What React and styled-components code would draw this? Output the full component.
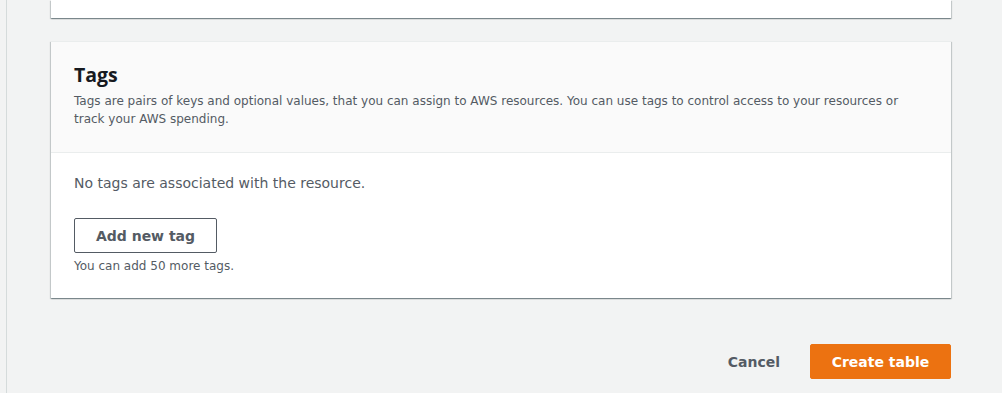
import styled, { createGlobalStyle } from "styled-components";

const GlobalStyle = createGlobalStyle`
  body {
    margin: 0;
    background-color: #f2f3f3;
    font-family: "DejaVu Sans", "Open Sans", sans-serif;
    color: #16191f;
  }
`;

const Page = styled.div`
  display: flex;
  min-height: 393px;
`;

const Rail = styled.div`
  width: 6px;
  border-right: 1px solid #d5dbdb;
  flex-shrink: 0;
`;

const Main = styled.div`
  flex: 1;
  padding: 0 51px 0 44px;
`;

const shadow = `
  box-shadow: 0 1px 1px 0 rgba(0, 28, 36, 0.3),
    1px 1px 1px 0 rgba(0, 28, 36, 0.15),
    -1px 1px 1px 0 rgba(0, 28, 36, 0.15);
`;

const TopCard = styled.div`
  height: 18px;
  background-color: #fff;
  ${shadow}
  margin-bottom: 23px;
`;

const Card = styled.section`
  background-color: #fff;
  border-top: 1px solid #eaeded;
  ${shadow}
`;

const CardHeader = styled.div`
  background-color: #fafafa;
  border-bottom: 1px solid #eaeded;
  padding: 22px 22px 24px 23px;
`;

const Title = styled.h2`
  margin: 0 0 6px;
  font-family: "Open Sans", "DejaVu Sans", sans-serif;
  font-size: 19.5px;
  line-height: 22px;
  font-weight: 700;
  color: #16191f;
`;

const Description = styled.p`
  margin: 0;
  font-size: 12px;
  line-height: 18px;
  color: #545b64;
  max-width: 840px;
`;

const CardBody = styled.div`
  padding: 20px 23px 24px;
`;

const EmptyText = styled.p`
  margin: 0 0 25px;
  font-size: 14px;
  line-height: 20px;
  color: #545b64;
`;

const Button = styled.button`
  font-family: inherit;
  font-size: 14px;
  font-weight: 700;
  line-height: 20px;
  height: 35px;
  padding: 0 20px;
  border-radius: 2px;
  cursor: pointer;
  border: 1px solid ${(p) => (p.$primary ? "#ec7211" : p.$link ? "transparent" : "#545b64")};
  background-color: ${(p) => (p.$primary ? "#ec7211" : p.$link ? "transparent" : "#fff")};
  color: ${(p) => (p.$primary ? "#fff" : "#545b64")};
  width: ${(p) => p.$width || "auto"};
`;

const Hint = styled.p`
  margin: 5px 0 0;
  font-size: 12px;
  line-height: 16px;
  color: #545b64;
`;

const Footer = styled.div`
  display: flex;
  justify-content: flex-end;
  align-items: center;
  gap: 9px;
  margin-top: 46px;
`;

export default function App() {
  return (
    <>
      <GlobalStyle />
      <Page>
        <Rail />
        <Main>
          <TopCard />
          <Card>
            <CardHeader>
              <Title>Tags</Title>
              <Description>
                Tags are pairs of keys and optional values, that you can assign to AWS resources. You can use tags to control access to your resources or track your AWS spending.
              </Description>
            </CardHeader>
            <CardBody>
              <EmptyText>No tags are associated with the resource.</EmptyText>
              <Button $width="143px">Add new tag</Button>
              <Hint>You can add 50 more tags.</Hint>
            </CardBody>
          </Card>
          <Footer>
            <Button $link>Cancel</Button>
            <Button $primary $width="141px">Create table</Button>
          </Footer>
        </Main>
      </Page>
    </>
  );
}
